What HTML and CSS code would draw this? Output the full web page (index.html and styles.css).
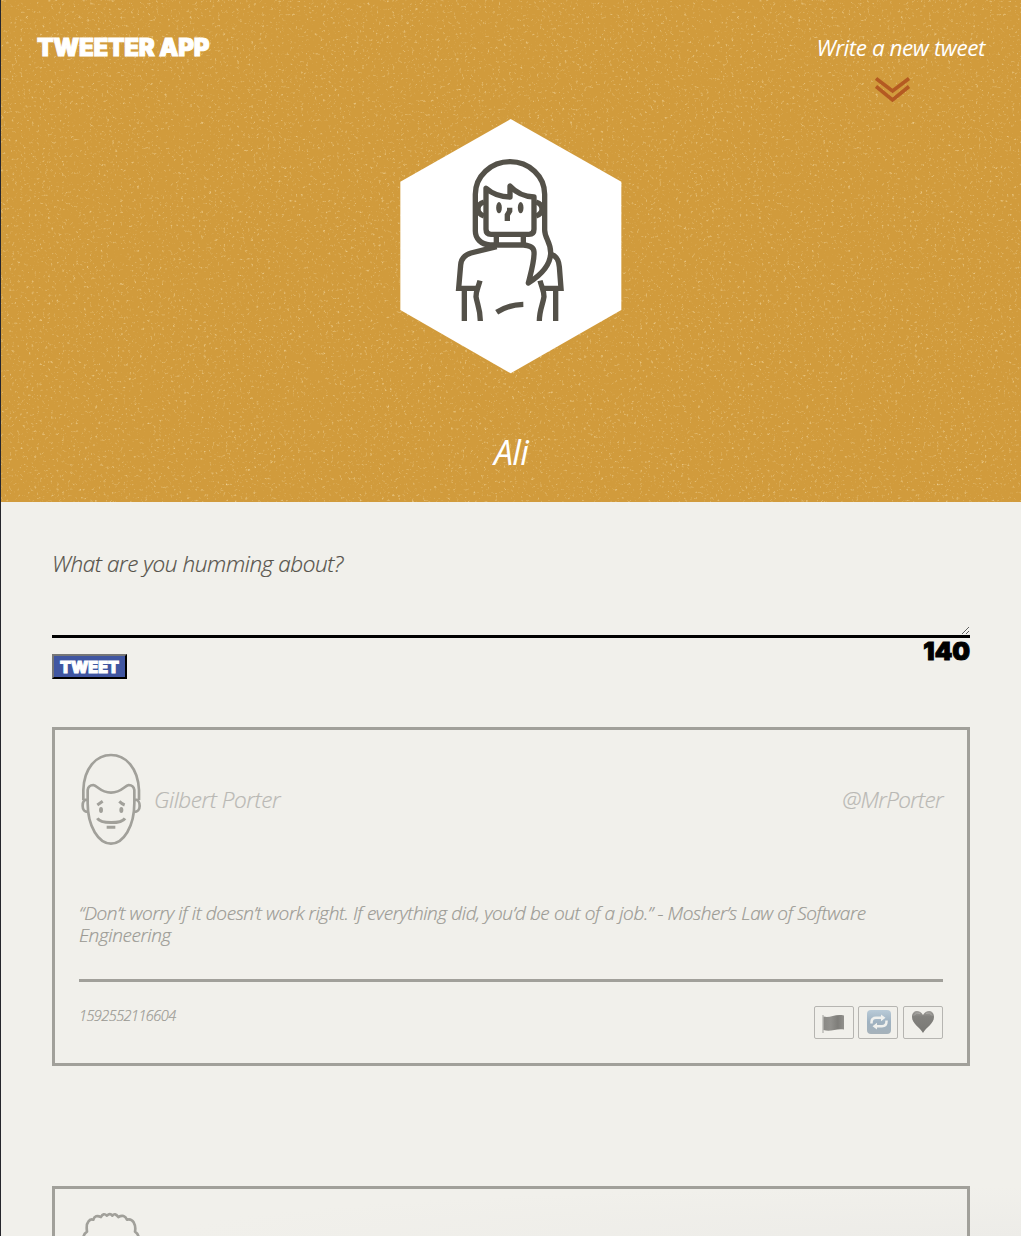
FILE: index.html
```html
<!DOCTYPE html>
<html lang="en">
<head>
<meta charset="utf-8">
<title>Tweeter App</title>
<link rel="stylesheet" href="styles.css">
</head>
<body>
<header class="hero">
  <svg class="texture" aria-hidden="true">
    <filter id="grain" x="0" y="0" width="100%" height="100%" color-interpolation-filters="sRGB">
      <feTurbulence type="fractalNoise" baseFrequency="0.36" numOctaves="3" seed="8" result="fine"/>
      <feColorMatrix type="matrix" values="0 0 0 0 0.94  0 0 0 0 0.83  0 0 0 0 0.60  2.6 0 0 0 -1.62"/>
    </filter>
    <rect width="100%" height="100%" filter="url(#grain)"/>
  </svg>
  <nav class="nav">
    <a class="brand display">TWEETER APP</a>
    <div class="compose">
      <span class="compose-text">Write a new tweet</span>
      <svg class="chevrons" viewBox="0 0 36 28"><path d="M1 2.500L17.500 15L34 2.500M1 10.500L17.500 24L34 10.500"/></svg>
    </div>
  </nav>
  <svg class="portrait" viewBox="0 0 720 810">
    <path class="hexagon" d="M362 27L694 215V600L362 790L31 600V215Z"/>
    <g class="ink">
      <path d="M300 405C272 403 256 385 256 363V253A104 98 0 0 1 464 253V360C464 385 482 395 482 428C482 468 445 500 415 519C425 480 434 450 432 425C431 410 415 406 400 405H295"/>
      <path d="M288 235V358Q288 373 303 373H417Q432 373 432 358V261C405 260 380 250 360 228V261C330 261 305 250 288 235Z"/>
      <path d="M282 276C268 280 264 288 264 297S268 313 282 318M438 276C452 280 456 288 456 297S452 313 438 318"/>
      <path class="mitre" d="M359 293V303L352 315V333M319 376V402M400 376V402M320 410L243 429Q214 438 212 465L206 535H262M485 434C501 439 506 450 508 470L513 535H462"/>
      <path d="M270 512C264 534 258 542 258 560C261 582 271 595 271 633M450 512C456 534 462 542 462 560C459 582 448 600 448 633M223 540V633M497 540V633M320 607Q355 584 400 583"/>
    </g>
    <ellipse class="eye" cx="327" cy="293" rx="8.500" ry="17"/><ellipse class="eye" cx="392" cy="293" rx="8.500" ry="17"/>
  </svg>
  <h2 class="name">Ali</h2>
</header>
<main class="container">
  <form class="new-tweet">
    <label class="prompt" for="tweet-text">What are you humming about?</label>
    <textarea id="tweet-text" class="tweet-text"></textarea>
    <div class="form-footer">
      <button class="submit display" type="button">TWEET</button>
      <output class="counter display">140</output>
    </div>
  </form>
  <article class="tweet">
    <div class="tweet-head">
      <svg class="avatar" viewBox="27 30 192 288">
        <path d="M40 180V150C42 85 78 45 123 45S204 85 207 150V180M53 178V150Q55 136 70 135C82 137 92 158 123 158S164 137 176 135Q191 136 193 150V190C193 260 160 311 123 311S53 260 53 190ZM50 179C42 179 38 187 38 198S44 216 53 216M196 179C204 179 209 187 209 198S202 216 193 216"/>
        <path class="bold" d="M82 195Q89 190 98 184M148 184Q156 192 164 195M82 235C92 252 154 252 165 235M110 262H136"/>
        <ellipse class="dot" cx="93" cy="210" rx="6" ry="9"/><ellipse class="dot" cx="154" cy="210" rx="6" ry="9"/>
      </svg>
      <span class="author">Gilbert Porter</span>
      <span class="handle">@MrPorter</span>
    </div>
    <p class="message">“Don’t worry if it doesn’t work right. If everything did, you’d be out of a job.” - Mosher’s Law of Software Engineering</p>
    <footer class="tweet-foot">
      <time class="stamp">1592552116604</time>
      <div class="actions">
        <span class="action"><svg viewBox="0 0 40 33">
          <defs><linearGradient id="flag"><stop stop-color="#8a8985"/><stop offset=".35" stop-color="#92918d"/><stop offset=".7" stop-color="#7e7d79"/><stop offset="1" stop-color="#92918d"/></linearGradient></defs>
          <path d="M9 9V27" stroke="#b0afab" stroke-width="1.200"/><path d="M9.500 10.500C16 12.500 21 7.500 30 9.500V23.500C22 22 17 26.500 9.500 24Z" fill="url(#flag)"/></svg></span>
        <span class="action"><svg viewBox="0 0 40 33">
          <defs><linearGradient id="sky" x2="0" y2="1"><stop stop-color="#b9cbd8"/><stop offset=".5" stop-color="#9fb2c1"/><stop offset="1" stop-color="#a6b2ba"/></linearGradient></defs>
          <rect x="9" y="4" width="24" height="24" rx="4" fill="url(#sky)"/>
          <path d="M13.500 17.500V16.500Q13.500 11.800 18 11.800H24M28.500 14.500V15.500Q28.500 20.200 24 20.200H18" fill="none" stroke="#f0f1ee" stroke-width="2.500"/><path d="M23 8.500L27.500 11.800L23 15.200ZM19 16.800L14.500 20.200L19 23.500Z" fill="#f0f1ee"/></svg></span>
        <span class="action"><svg viewBox="0 0 40 33">
          <defs><linearGradient id="heart" x2="0" y2="1"><stop stop-color="#a19f9b"/><stop offset=".25" stop-color="#83827e"/><stop offset="1" stop-color="#797874"/></linearGradient></defs>
          <path d="M20 27C17 21 9 18 9 11C9 3.800 17 3.200 20 9C23 3.200 31 3.800 31 11C31 18 23 21 20 27Z" fill="url(#heart)"/><path d="M11 9.500Q13 5.500 17 7.500M23 7.500Q27 5.500 29 9.500" stroke="#aaa9a5" fill="none"/></svg></span>
      </div>
    </footer>
  </article>
  <article class="tweet">
    <div class="tweet-head">
      <svg class="avatar" viewBox="24 32 192 288">
        <path d="M36 150Q32 134 37 122Q36 108 48 100Q45 78 52 70Q58 60 67 64Q72 48 90 56Q97 42 108 52Q117 43 124 52Q132 42 142 56Q160 46 168 64Q180 60 188 72Q195 84 192 100Q204 108 203 122Q209 134 204 150V210C200 270 155 311 123 311S40 270 36 210Z"/>
      </svg>
    </div>
  </article>
</main>
</body>
</html>
```
FILE: styles.css
```css
* { box-sizing: border-box; }
html { background: #f1f0eb; overflow: hidden; }
body {
  margin: 0;
  height: 1236px;
  overflow: hidden;
  border-left: 1px solid #26262c;
  background: radial-gradient(ellipse 850px 50px at 100% 100%, #edece8, #f1f0eb);
  color: #545149;
  font-family: "Open Sans", "Noto Sans", sans-serif;
  font-style: italic;
  font-weight: 300;
  letter-spacing: -0.410px;
  -webkit-text-stroke: 0.200px currentColor;
}
.display {
  font-family: Inter, "Liberation Sans", sans-serif;
  font-style: normal;
  font-weight: 900;
  letter-spacing: 0;
  -webkit-text-stroke: 1px currentColor;
}
.hero {
  position: relative;
  display: flex;
  flex-direction: column;
  align-items: center;
  height: 502px;
  background: #d19b3c;
  color: #fff;
}
.texture { position: absolute; inset: 0; width: 100%; height: 100%; }
.nav, .portrait, .name { position: relative; }
.nav {
  display: flex;
  justify-content: space-between;
  align-items: flex-start;
  align-self: stretch;
  height: 110px;
  padding: 32px 36px 0;
}
.brand { font-size: 24px; line-height: 31px; letter-spacing: -0.2px; }
.compose {
  display: flex;
  flex-direction: column;
  align-items: flex-end;
  font-size: 22.500px;
  line-height: 32px;
  font-weight: 400;
  letter-spacing: -0.450px;
  -webkit-text-stroke: 0;
}
.chevrons { width: 36px; height: 28px; margin: 12px 74px 0 0; fill: none; stroke: #b45a22; stroke-width: 3.600; }
.portrait { width: 240px; height: 270px; margin-right: 2px; }
.hexagon { fill: #fff; }
.ink { fill: none; stroke: #545149; stroke-width: 16; stroke-linejoin: round; }
.mitre { stroke-linejoin: miter; }
.eye { fill: #545149; }
.name { margin: 48px 0 0; font-size: 34px; line-height: 48px; font-weight: 400; letter-spacing: -0.720px; -webkit-text-stroke: 0; }
.container { padding: 46px 51px 0; }
.new-tweet { display: flex; flex-direction: column; height: 179px; }
.prompt { font-size: 22.500px; line-height: 32px; }
.tweet-text {
  height: 58px;
  padding: 0;
  border: 0;
  border-bottom: 3px solid #000;
  background: transparent;
  outline: 0;
  resize: vertical;
}
.form-footer { display: flex; justify-content: space-between; align-items: flex-start; }
.submit {
  width: 75px;
  height: 25px;
  margin-top: 16px;
  padding: 0;
  border: 2px outset #767676;
  border-color: #767676 #212121 #212121 #767676;
  background: #4056a1;
  color: #fff;
  font-size: 16px;
  line-height: 20px;
}
.counter { font-size: 25px; line-height: 27px; color: #000; }
.tweet {
  height: 339px;
  margin-bottom: 120px;
  padding: 20px 24px 0;
  border: 3px solid #a1a09a;
  color: #9b9a94;
}
.tweet:last-child { height: 50px; margin-bottom: 0; border-bottom: 0; overflow: hidden; }
.tweet-head { display: flex; align-items: center; height: 96px; font-size: 22.500px; color: #b9b8b4; }
.avatar { width: 64px; height: 96px; margin-right: 11px; fill: none; stroke: #a1a09a; stroke-width: 8; stroke-linejoin: round; }
.avatar .bold { stroke-width: 9; }
.avatar .dot { fill: #a1a09a; stroke: none; }
.author, .handle { margin-top: 3px; }
.handle { margin-left: auto; letter-spacing: -0.650px; }
.message { height: 77px; margin: 56px 0 0; font-size: 19px; line-height: 22px; letter-spacing: -0.400px; }
.tweet-foot { display: flex; justify-content: space-between; padding-top: 24px; border-top: 3px solid #a1a09a; }
.stamp { font-size: 14.500px; line-height: 20px; letter-spacing: -0.550px; }
.actions { display: flex; gap: 4.600px; }
.action { width: 40px; height: 33px; border: 1px solid #b6b5b1; border-radius: 2px; }
.action svg { display: block; width: 40px; height: 33px; margin: -1px; }
```
